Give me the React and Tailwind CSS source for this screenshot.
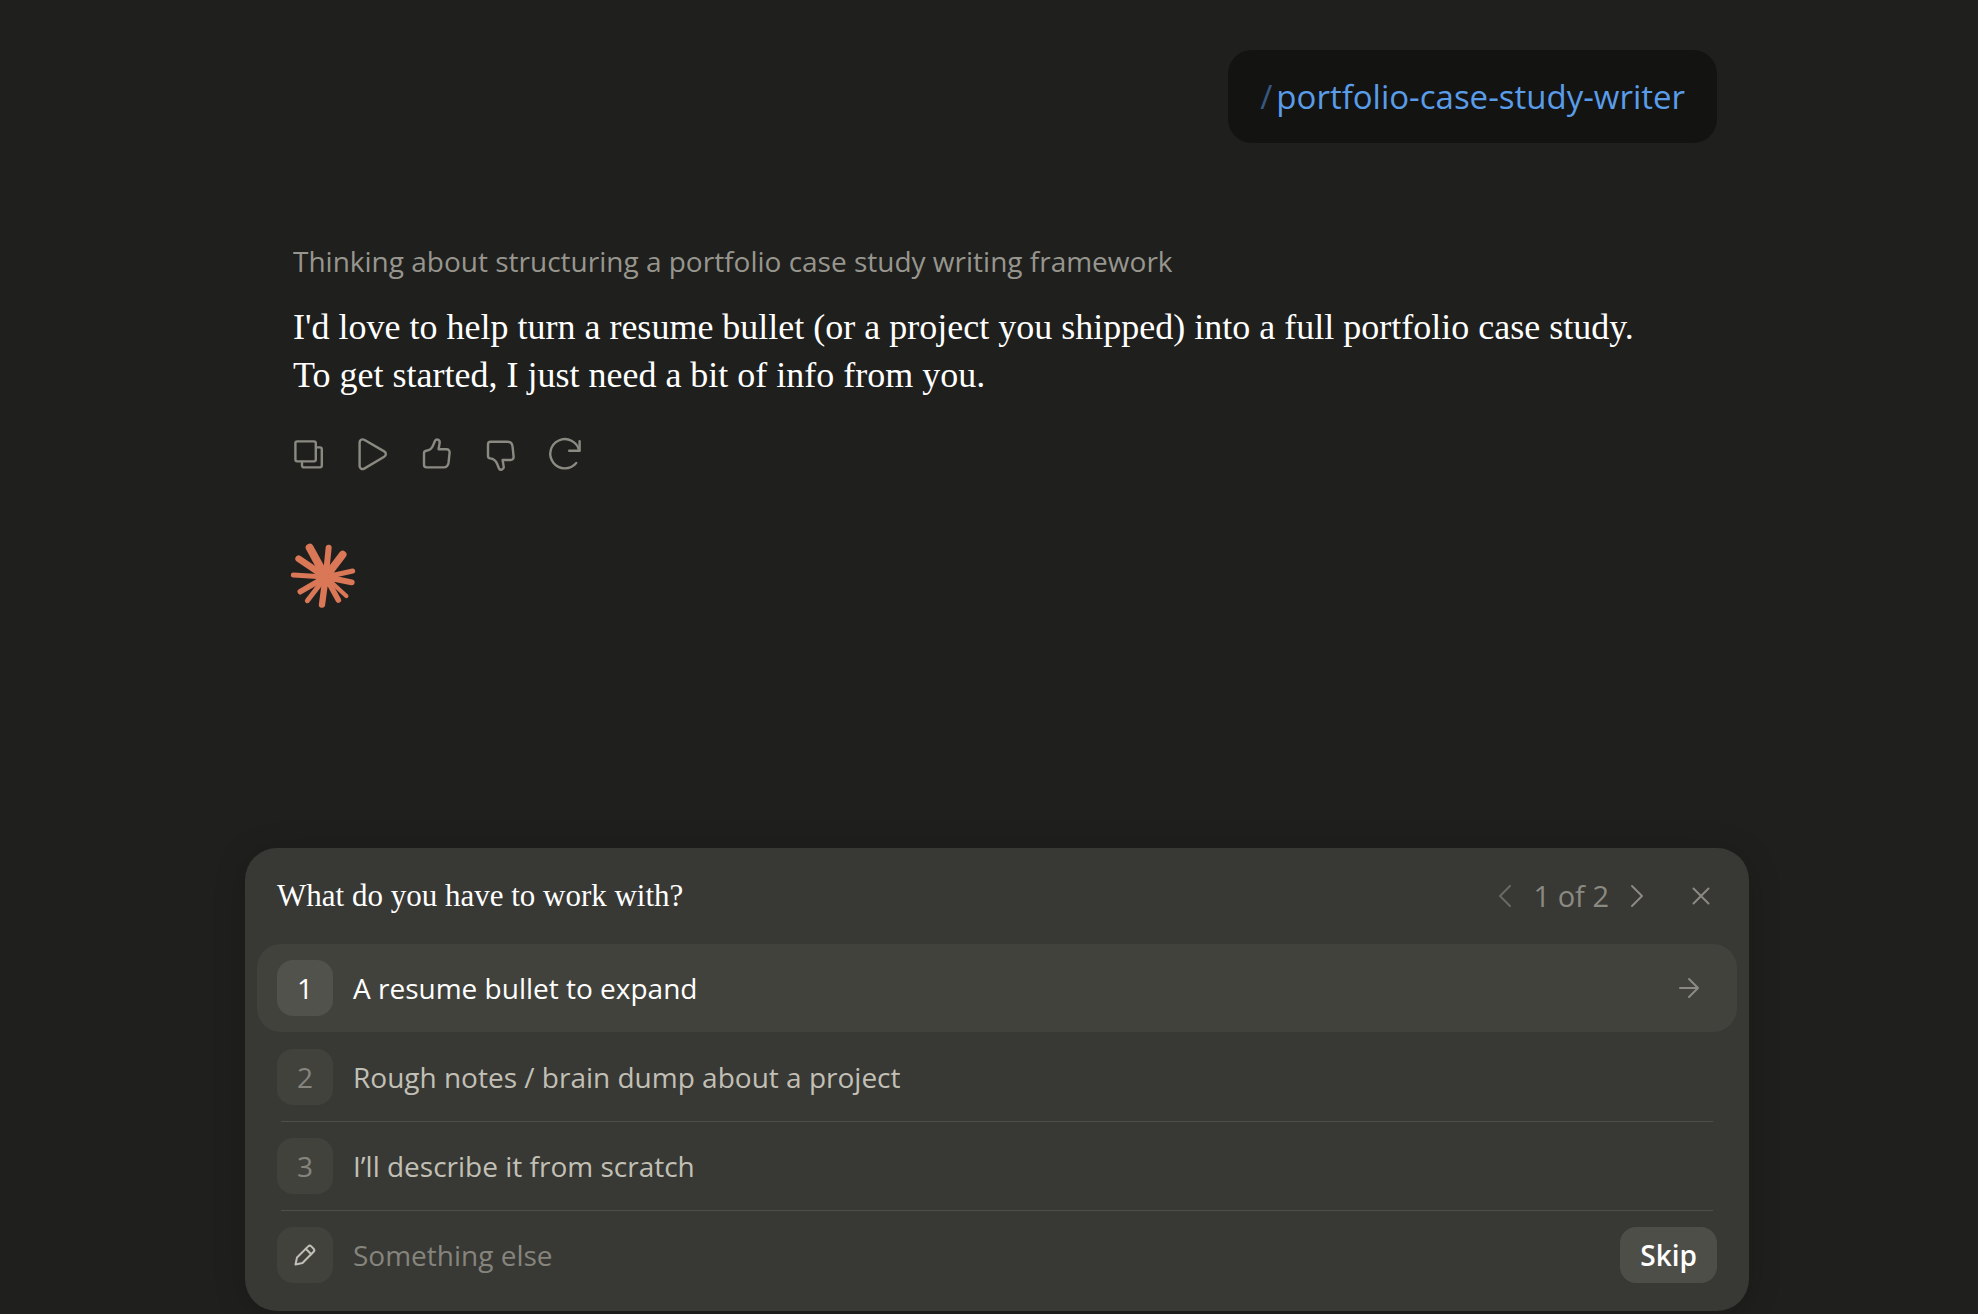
import React, { useState } from "react";

const OPTIONS = [
  "A resume bullet to expand",
  "Rough notes / brain dump about a project",
  "I’ll describe it from scratch",
];

const THUMB =
  "M5 8.3c2-.2 2.9-1.2 3.5-2.8l.8-2c.3-.8.9-1 1.5-.8.8.3 1.1 1 .9 1.8l-.5 3h4c1 0 1.6.8 1.5 1.7l-.5 4.9c-.2 1.6-1.1 2.5-2.5 2.5H5.2c-.8 0-1.3-.5-1.3-1.3V9.5c0-.7.4-1.1 1.1-1.2z";

const ACTIONS = [
  {
    label: "Copy",
    icon: (
      <>
        <rect x="3.6" y="3.6" width="10.2" height="10" rx="0.9" />
        <path d="M13.9 6.6h2a.9.9 0 0 1 .9.9v8.2a.9.9 0 0 1-.9.9H7.8a.9.9 0 0 1-.9-.9v-2" />
      </>
    ),
  },
  {
    label: "Read aloud",
    icon: <path d="M3.7 4.1c0-1.2 1.2-1.9 2.3-1.3l10 5.8c1.1.6 1.1 2.1 0 2.7L6 17.2c-1.1.6-2.3-.1-2.3-1.3z" />,
  },
  { label: "Good response", icon: <path d={THUMB} /> },
  { label: "Bad response", icon: <path d={THUMB} transform="matrix(1 0 0 -1 0 20.4)" /> },
  {
    label: "Retry",
    icon: (
      <>
        <path d="M17.5 8.3a7.3 7.3 0 1 0-1.5 6.1" />
        <path d="M17.7 3.5v4.8h-5.2" />
      </>
    ),
  },
];

// [x, y, thickness] of every ray's tip, measured around the centre at 125,124
const RAYS = [
  [77, 36, 24],
  [134, 36, 18],
  [176, 57, 23],
  [206, 106, 15],
  [203, 140, 18],
  [187, 181, 13],
  [163, 193, 17],
  [114, 207, 19],
  [70, 195, 15],
  [49, 168, 17],
  [28, 118, 15],
  [44, 69, 20],
];

const Burst = () => (
  <svg viewBox="27 22 192 192" className="size-16 overflow-visible text-[#d97757]" aria-hidden="true">
    <circle cx="125" cy="124" r="30" fill="currentColor" />
    {RAYS.map(([x, y, w]) => (
      <line key={`${x}-${y}`} x1="125" y1="124" x2={x} y2={y} strokeWidth={w} stroke="currentColor" strokeLinecap="round" />
    ))}
  </svg>
);

const Icon = ({ className, width = 2, box = "0 0 24 24", children }) => (
  <svg
    viewBox={box}
    fill="none"
    stroke="currentColor"
    strokeWidth={width}
    strokeLinecap="round"
    strokeLinejoin="round"
    className={className}
    aria-hidden="true"
  >
    {children}
  </svg>
);

const App = () => {
  const [selected, setSelected] = useState(0);
  const [other, setOther] = useState("");

  return (
    <div className="min-h-screen bg-[#1f1f1d] pl-4 font-['Open_Sans',sans-serif] text-white">
      <main className="mx-auto flex min-h-screen w-full max-w-[1504px] flex-col pt-[50px] pb-[3px]">
        {/* Conversation */}
        <section className="px-8">
          <div className="flex justify-end">
            <p className="rounded-3xl bg-[#131312] px-8 py-6 text-[33px] leading-[45px] text-[#5a9ce8]">
              <span className="mr-1 opacity-50">/</span>
              portfolio-case-study-writer
            </p>
          </div>

          <div className="mt-24 px-4">
            <p className="text-[28px] leading-11 text-[#97968e]">
              Thinking about structuring a portfolio case study writing framework
            </p>
            <p className="mt-5 font-['Liberation_Serif',serif] text-[36px] leading-[48px]">
              I'd love to help turn a resume bullet (or a project you shipped) into a full portfolio case study.
              <br />
              To get started, I just need a bit of info from you.
            </p>

            <div className="mt-6 -ml-4 flex">
              {ACTIONS.map(({ label, icon }) => (
                <button key={label} type="button" aria-label={label} className="flex size-16 items-center justify-center text-[#8b8a82]">
                  <Icon className="size-10" width={1.2} box="0.4 0.4 20 20">
                    {icon}
                  </Icon>
                </button>
              ))}
            </div>

            <div className="mt-14">
              <Burst />
            </div>
          </div>
        </section>

        {/* Question card */}
        <section className="mt-auto rounded-[32px] bg-[#383834] px-3 pb-7 shadow-[0_4px_32px_rgba(0,0,0,0.18)]">
          <header className="flex h-24 items-center justify-between px-5">
            <h2 className="font-['Liberation_Serif',serif] text-[31px] leading-10">What do you have to work with?</h2>
            <div className="flex items-center text-[#8b8a82]">
              <button type="button" aria-label="Previous question" disabled className="flex size-8 items-center justify-center opacity-60">
                <Icon className="size-6">
                  <path d="M16 2 6 12l10 10" />
                </Icon>
              </button>
              <span className="px-3 text-[29px] leading-10">1 of 2</span>
              <button type="button" aria-label="Next question" className="flex size-8 items-center justify-center">
                <Icon className="size-6">
                  <path d="m7 2 10 10L7 22" />
                </Icon>
              </button>
              <button type="button" aria-label="Close" className="ml-8 flex size-8 items-center justify-center">
                <Icon className="size-6">
                  <path d="m4.5 4.5 15 15M19.5 4.5l-15 15" />
                </Icon>
              </button>
            </div>
          </header>

          <ul>
            {OPTIONS.map((text, i) => {
              const active = i === selected;
              return (
                <li key={text}>
                  <button
                    type="button"
                    onClick={() => setSelected(i)}
                    className={`flex h-22 w-full items-center gap-5 rounded-3xl px-5 text-left text-[28px] leading-10 ${
                      active ? "bg-[#42423d] text-white" : "text-[#c2c0b6]"
                    }`}
                  >
                    <span
                      className={`flex size-14 items-center justify-center rounded-2xl ${
                        active ? "bg-[#52524d]" : "bg-[#42423d] text-[#85847d]"
                      }`}
                    >
                      {i + 1}
                    </span>
                    <span className="flex-1">{text}</span>
                    {active && (
                      <Icon className="mr-4 size-6 text-[#8b8a82]">
                        <path d="M3 12h18M12 3l9 9-9 9" />
                      </Icon>
                    )}
                  </button>
                  <div className={`mx-6 h-px ${active ? "" : "bg-[#4f4f4a]"}`} />
                </li>
              );
            })}
          </ul>

          <div className="flex items-center gap-5 px-5 pt-4">
            <label htmlFor="other" aria-label="Something else" className="flex size-14 items-center justify-center rounded-2xl bg-[#42423d] text-[#c2c0b6]">
              <Icon className="size-6">
                <path d="M2.5 21.5 4 14.5 15.2 3.4a2.2 2.2 0 0 1 3.1 0l2.3 2.3a2.2 2.2 0 0 1 0 3.1L9.5 20z" />
                <path d="m12.8 5.8 5.4 5.4" />
              </Icon>
            </label>
            <input
              id="other"
              type="text"
              value={other}
              onChange={(e) => setOther(e.target.value)}
              placeholder="Something else"
              className="min-w-0 flex-1 bg-transparent text-[28px] leading-10 outline-none placeholder:text-[#85847d]"
            />
            <button type="button" className="h-14 rounded-2xl bg-[#4e4e49] px-5 text-[28px] leading-10 font-semibold">
              Skip
            </button>
          </div>
        </section>
      </main>
    </div>
  );
};

export default App;
